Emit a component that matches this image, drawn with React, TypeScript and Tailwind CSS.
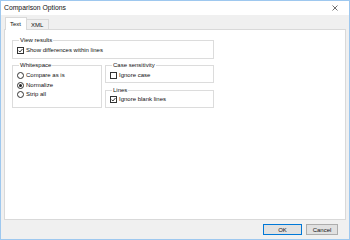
import React from 'react';

const font = { fontFamily: '"Liberation Sans", Arial, sans-serif' };

const CheckBox: React.FC<{ checked?: boolean; label: string }> = ({ checked, label }) => (
  <div className="flex items-center gap-[2px] h-[9px]">
    <div className="w-[7px] h-[7px] border border-[#333] bg-white flex items-center justify-center">
      {checked && (
        <svg width="5" height="5" viewBox="0 0 5 5">
          <path d="M0.5 2.6 L1.9 4 L4.5 1" fill="none" stroke="#222" strokeWidth="0.9" />
        </svg>
      )}
    </div>
    <span>{label}</span>
  </div>
);

const Radio: React.FC<{ checked?: boolean; label: string }> = ({ checked, label }) => (
  <div className="flex items-center gap-[2px] h-[9.5px]">
    <div className="w-[7px] h-[7px] rounded-full border border-[#333] bg-white flex items-center justify-center">
      {checked && <div className="w-[3px] h-[3px] rounded-full bg-[#222]" />}
    </div>
    <span>{label}</span>
  </div>
);

const Group: React.FC<{ title: string; className?: string; children?: React.ReactNode }> = ({ title, className, children }) => (
  <fieldset className={`border border-[#dcdcdc] px-[4px] ${className || ''}`}>
    <legend className="ml-[2px] px-[1px] leading-[8px]">{title}</legend>
    {children}
  </fieldset>
);

export default function App() {
  return (
    <div className="w-[350px] h-[240px] flex flex-col border border-[#9ec8ef] bg-[#f0f0f0] text-[6px] text-[#111]" style={font}>
      {/* title bar */}
      <div className="h-[14px] bg-white flex items-center justify-between pl-[3px] pr-[11px]">
        <span className="text-[6.8px]">Comparison Options</span>
        <svg width="6" height="6" viewBox="0 0 6 6">
          <path d="M0.5 0.5 L5.5 5.5 M5.5 0.5 L0.5 5.5" stroke="#333" strokeWidth="0.7" />
        </svg>
      </div>

      {/* body */}
      <div className="flex-1 flex flex-col px-[3px] pt-[2px]">
        <div className="flex items-end h-[12px] pl-[1px]">
          <div className="h-[13px] w-[22px] bg-white border border-b-0 border-[#d9d9d9] pl-[4px] pt-[2px] relative top-[1px] z-10">Text</div>
          <div className="h-[10px] w-[22px] border border-b-0 border-l-0 border-[#d9d9d9] pl-[4px] pt-[1px]">XML</div>
        </div>
        <div className="h-[191px] bg-white border border-[#d9d9d9] pl-[7px] pt-[6px] flex flex-col gap-[2px]">
          <Group title="View results" className="w-[202px] h-[23px]">
            <div className="pt-[2px]">
              <CheckBox checked label="Show differences within lines" />
            </div>
          </Group>
          <div className="flex gap-[3px]">
            <Group title="Whitespace" className="w-[90px] h-[47px]">
              <div className="pt-[2px]">
                <Radio label="Compare as is" />
                <Radio checked label="Normalize" />
                <Radio label="Strip all" />
              </div>
            </Group>
            <div className="flex flex-col gap-[3px]">
              <Group title="Case sensitivity" className="w-[109px] h-[22px]">
                <div className="pt-[2px]">
                  <CheckBox label="Ignore case" />
                </div>
              </Group>
              <Group title="Lines" className="w-[109px] h-[22px]">
                <div className="pt-[1px]">
                  <CheckBox checked label="Ignore blank lines" />
                </div>
              </Group>
            </div>
          </div>
        </div>
        <div className="flex justify-end gap-[4px] pt-[4px] pr-[8px]">
          <button className="w-[39px] h-[11px] bg-[#e1e1e1] border border-[#0078d7] flex items-center justify-center leading-none">OK</button>
          <button className="w-[32px] h-[11px] bg-[#e1e1e1] border border-[#adadad] flex items-center justify-center leading-none">Cancel</button>
        </div>
      </div>
    </div>
  );
}
